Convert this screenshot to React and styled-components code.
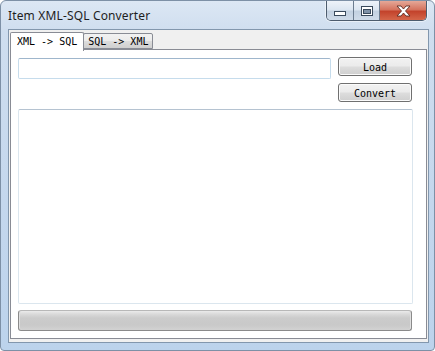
import React from "react";
import styled, { createGlobalStyle } from "styled-components";

const Global = createGlobalStyle`
  html, body { margin: 0; padding: 0; background: #ffffff; }
  body { width: 435px; height: 351px; overflow: hidden; }
`;

const Window = styled.div`
  width: 435px;
  height: 351px;
  box-sizing: border-box;
  display: flex;
  flex-direction: column;
  background: linear-gradient(180deg, #dce7f4 0px, #cfdeef 30px, #c4d7ed 200px, #bcd3ec 351px);
  border: 1px solid #7d90a6;
  border-radius: 6px 6px 4px 4px;
  position: relative;
  overflow: hidden;
`;

const TitleBar = styled.div`
  height: 28px;
  display: flex;
  align-items: flex-start;
  justify-content: space-between;
  padding-left: 7px;
`;

const Title = styled.div`
  font-family: "Noto Sans", "Open Sans", sans-serif;
  font-size: 12px;
  color: #1e1e1e;
  margin-top: 6px;
  letter-spacing: 0.15px;
`;

const CaptionGroup = styled.div`
  display: flex;
  height: 19px;
  margin-right: 7px;
  border: 1px solid #4d5c6e;
  border-top: none;
  border-radius: 0 0 5px 5px;
  overflow: hidden;
  box-shadow: 0 0 0 1px rgba(255,255,255,0.5);
`;

const CapBtn = styled.div`
  width: ${(p) => p.$w}px;
  height: 19px;
  display: flex;
  align-items: center;
  justify-content: center;
  box-sizing: border-box;
  padding-top: ${(p) => p.$pt || 0}px;
  border-left: ${(p) => (p.$first ? "none" : "1px solid #6c7c8f")};
  background: ${(p) =>
    p.$close
      ? "linear-gradient(180deg, #e5a898 0%, #d5745f 45%, #c3432c 55%, #d4664a 100%)"
      : "linear-gradient(180deg, #eef3f9 0%, #dce6f1 45%, #c3d1e1 55%, #cfdbe9 100%)"};
`;

const Frame = styled.div`
  flex: 1;
  display: flex;
  padding: 0 7px 7px 7px;
`;

const Client = styled.div`
  flex: 1;
  background: #f0f0f0;
  border: 1px solid #8297ad;
  display: flex;
  flex-direction: column;
  padding: 2px 1px 3px 1px;
`;

const TabStrip = styled.div`
  display: flex;
  align-items: flex-end;
  height: 17px;
  position: relative;
  z-index: 1;
`;

const Tab = styled.div`
  font-family: "DejaVu Sans Mono", "Liberation Mono", monospace;
  font-size: 10px;
  color: #000;
  box-sizing: border-box;
  border: 1px solid #898c95;
  border-bottom: ${(p) => (p.$active ? "none" : "1px solid #898c95")};
  border-radius: 2px 2px 0 0;
  background: ${(p) =>
    p.$active ? "#ffffff" : "linear-gradient(180deg, #f2f2f2 0%, #ebebeb 50%, #dddddd 51%, #cfcfcf 100%)"};
  height: ${(p) => (p.$active ? 19 : 16)}px;
  margin-bottom: ${(p) => (p.$active ? -2 : 0)}px;
  margin-left: ${(p) => (p.$active ? 0 : -1)}px;
  padding: ${(p) => (p.$active ? "3px 6px 0 6px" : "2px 4px 0 4px")};
  white-space: pre;
  line-height: 11px;
`;

const Panel = styled.div`
  flex: 1;
  background: #ffffff;
  border: 1px solid #898c95;
  display: flex;
  flex-direction: column;
  padding: 7px 14px 7px 7px;
  gap: 6px;
`;

const TopArea = styled.div`
  display: flex;
  gap: 7px;
  margin-bottom: 1px;
`;

const TextBox = styled.div`
  width: 313px;
  height: 21px;
  box-sizing: border-box;
  margin-top: 1px;
  border: 1px solid #c6dcec;
  border-top-color: #9fb6cc;
  border-radius: 2px;
  background: #fff;
`;

const ButtonCol = styled.div`
  display: flex;
  flex-direction: column;
  gap: 7px;
`;

const Button = styled.div`
  width: 74px;
  height: 19px;
  box-sizing: border-box;
  border: 1px solid #707070;
  border-radius: 3px;
  box-shadow: inset 0 0 0 1px #fbfbfb;
  background: linear-gradient(180deg, #f2f2f2 0%, #ebebeb 48%, #dddddd 52%, #cfcfcf 100%);
  font-family: "DejaVu Sans Mono", "Liberation Mono", monospace;
  font-size: 10px;
  color: #000;
  display: flex;
  align-items: center;
  justify-content: center;
  padding-top: 1px;
`;

const TextArea = styled.div`
  flex: 1;
  box-sizing: border-box;
  margin-right: -1px;
  border: 1px solid #dbe6ee;
  border-top-color: #b5c3d1;
  border-radius: 2px;
  background: #fff;
`;

const Progress = styled.div`
  height: 21px;
  flex: none;
  box-sizing: border-box;
  border: 1px solid #8a8a8a;
  border-top-color: #b8b8b8;
  border-radius: 3px;
  background: linear-gradient(180deg, #ebebeb 0px, #dadada 3px, #cbcbcb 7px, #c9c9c9 14px, #d2d2d2 19px);
  box-shadow: inset 1px 0 0 #e0e0e0, inset -1px 0 0 #e0e0e0;
`;

export default function App() {
  return (
    <>
      <Global />
      <Window>
        <TitleBar>
          <Title>Item XML-SQL Converter</Title>
          <CaptionGroup>
            <CapBtn $w={26} $first $pt={5}>
              <svg width="12" height="5" viewBox="0 0 12 5">
                <rect x="0.5" y="0.5" width="11" height="4" fill="#fff" stroke="#3a4a5c" />
              </svg>
            </CapBtn>
            <CapBtn $w={26}>
              <svg width="12" height="10" viewBox="0 0 12 10">
                <rect x="0.5" y="0.5" width="11" height="9" fill="#fff" stroke="#3a4a5c" />
                <rect x="2.5" y="3.5" width="7" height="4" fill="#7f92a8" stroke="#3a4a5c" />
              </svg>
            </CapBtn>
            <CapBtn $w={47} $close>
              <svg width="15" height="12" viewBox="0 0 15 12">
                <path
                  d="M1 1 H5 L7.5 4 L10 1 H14 L9.5 6 L14 11 H10 L7.5 8 L5 11 H1 L5.5 6 Z"
                  fill="#fff"
                  stroke="#5a2a22"
                  strokeWidth="0.9"
                  strokeLinejoin="round"
                />
              </svg>
            </CapBtn>
          </CaptionGroup>
        </TitleBar>
        <Frame>
          <Client>
            <TabStrip>
              <Tab $active>{"XML -> SQL"}</Tab>
              <Tab>{"SQL -> XML"}</Tab>
            </TabStrip>
            <Panel>
              <TopArea>
                <TextBox />
                <ButtonCol>
                  <Button>Load</Button>
                  <Button>Convert</Button>
                </ButtonCol>
              </TopArea>
              <TextArea />
              <Progress />
            </Panel>
          </Client>
        </Frame>
      </Window>
    </>
  );
}
